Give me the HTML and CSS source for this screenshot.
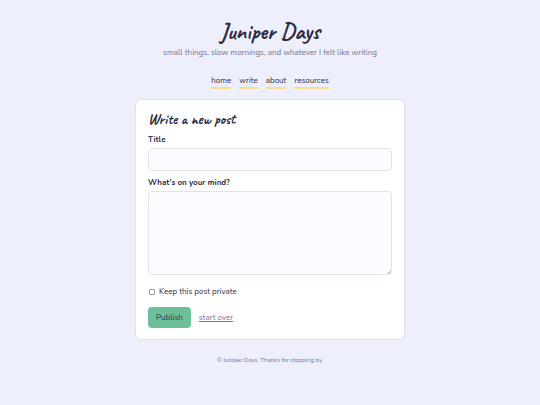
FILE: index.html
```html
<!DOCTYPE html>
<html lang="en">
  <head>
    <meta charset="utf-8">
    <meta name="viewport" content="width=device-width, initial-scale=1">
    <title>Juniper Days</title>
    <link rel="stylesheet" href="styles.css">
  </head>
  <body>
    <header class="site-header">
      <h1 class="site-title">Juniper Days</h1>
      <p class="tagline">small things, slow mornings, and whatever I felt like writing</p>
    </header>

    <nav class="site-nav">
      <a href="#home">home</a>
      <a href="#write">write</a>
      <a href="#about">about</a>
      <a href="#resources">resources</a>
    </nav>

    <main class="card">
      <h2 class="card-title">Write a new post</h2>
      <form class="post-form">
        <label class="field-label" for="title">Title</label>
        <input class="field" id="title" name="title" type="text">

        <label class="field-label" for="body">What's on your mind?</label>
        <textarea class="field field-body" id="body" name="body"></textarea>

        <div class="check-row">
          <input class="check" id="private" name="private" type="checkbox">
          <label for="private">Keep this post private</label>
        </div>

        <div class="actions">
          <button class="publish" type="submit">Publish</button>
          <a class="start-over" href="#write">start over</a>
        </div>
      </form>
    </main>

    <footer class="site-footer">© Juniper Days. Thanks for stopping by.</footer>
  </body>
</html>
```

FILE: styles.css
```css
* {
  box-sizing: border-box;
}

body {
  margin: 0;
  padding: 20px 12px;
  background: #edeffc;
  color: #2d2942;
  font-family: Nunito, "Open Sans", sans-serif;
  font-size: 8px;
  line-height: 12px;
}

.site-header {
  text-align: center;
}

.site-title,
.card-title {
  margin: 0;
  font-family: Caveat, Lato, cursive;
  font-weight: 600;
}

.site-title {
  font-size: 23px;
  line-height: 24px;
}

.tagline {
  margin: 3px 0 0;
  color: #77738b;
}

.site-nav {
  display: flex;
  flex-wrap: wrap;
  justify-content: center;
  gap: 8px;
  margin-top: 16px;
}

.site-nav a {
  border-bottom: 2px solid #f8dc88;
  color: inherit;
  text-decoration: none;
}

.card {
  max-width: 270px;
  margin: 10px auto 0;
  padding: 11px 12px;
  border: 1px solid #e0e0ee;
  border-radius: 6px;
  background: #fff;
}

.card-title {
  font-size: 15px;
  line-height: 17px;
}

.post-form {
  display: flex;
  flex-direction: column;
}

.field-label {
  margin: 6px 0 2px;
  font-weight: 700;
}

.field {
  width: 100%;
  height: 23px;
  padding: 4px 6px;
  border: 1px solid #e0e2ee;
  border-radius: 4px;
  background: #fbfcff;
  color: inherit;
  font: inherit;
}

.field-body {
  height: 84px;
  resize: vertical;
}

/* small solid corner in place of the default grip */
.field-body::-webkit-resizer {
  background: linear-gradient(135deg, transparent 84%, #d3d3da 84%);
}

.check-row {
  display: flex;
  align-items: center;
  gap: 4px;
  margin-top: 11px;
}

.check {
  appearance: none;
  width: 6px;
  height: 6px;
  margin: 0 0 0 1px;
  border: 1px solid #9a98a4;
  border-radius: 1px;
  background: #fff;
}

.check:checked {
  background: #6dbf9c;
}

.actions {
  display: flex;
  align-items: center;
  gap: 8px;
  margin-top: 9px;
}

.publish {
  padding: 5px 8px;
  border: 0;
  border-radius: 4px;
  background: #6dbf9c;
  color: #233c40;
  font: inherit;
  line-height: 11px;
  cursor: pointer;
}

.start-over {
  color: #77738b;
}

.site-footer {
  margin-top: 14px;
  color: #77738b;
  font-size: 6px;
  text-align: center;
}
```
